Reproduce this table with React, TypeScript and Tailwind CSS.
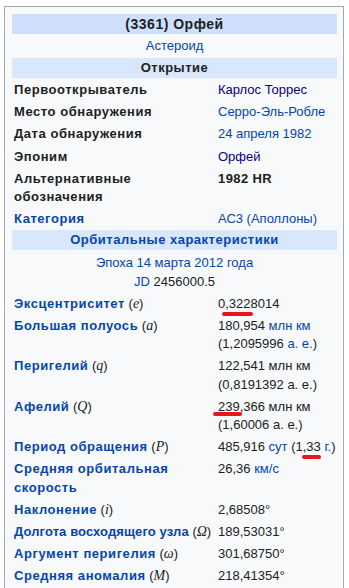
const link = "text-[#0645ad]";
const visited = "text-[#0b0080]";

function Band({ children, tone = "bg-[#d8e7fc]" }: { children: React.ReactNode; tone?: string }) {
  return (
    <div className={`${tone} h-[20px] flex items-center justify-center font-bold tracking-[0.5px]`}>{children}</div>
  );
}

function Row({ label, children, nowrap = false }: { label: React.ReactNode; children: React.ReactNode; nowrap?: boolean }) {
  return (
    <div className="flex py-[2px]">
      <div className={`w-[206px] pl-[2px] pr-[4px] font-bold shrink-0 ${nowrap ? "whitespace-nowrap tracking-[0.1px]" : "tracking-[0.55px]"}`}>{label}</div>
      <div className="flex-1">{children}</div>
    </div>
  );
}

function Sym({ s }: { s: string }) {
  return (
    <span className="font-normal tracking-normal text-[#202122]">
      {" "}(<span className="italic text-[14px]" style={{ fontFamily: '"Liberation Serif", serif' }}>{s}</span>)
    </span>
  );
}

export default function App() {
  return (
    <div className="bg-white min-h-[588px] pt-[6px]" style={{ fontFamily: '"Liberation Sans", Arial, sans-serif' }}>
      <div className="relative ml-[4px] w-[340px] border border-[#a2a9b1] bg-[#f8f9fa] pt-[7px] pl-[7px] pr-[6px] pb-[10px] text-[13px] leading-[18.2px] text-[#202122]">
        <Band tone="bg-[#cee0fd]">
          <span className="text-[14px]">(3361) Орфей</span>
        </Band>
        <div className={`h-[24px] flex items-center justify-center ${link}`}>Астероид</div>
        <Band>Открытие</Band>
        <div className="h-[1px]" />
        <Row label="Первооткрыватель">
          <span className={visited}>Карлос Торрес</span>
        </Row>
        <Row label="Место обнаружения">
          <span className={link}>Серро-Эль-Робле</span>
        </Row>
        <Row label="Дата обнаружения">
          <span className={link}>24 апреля 1982</span>
        </Row>
        <Row label="Эпоним">
          <span className={visited}>Орфей</span>
        </Row>
        <Row label="Альтернативные обозначения">
          <span className="font-bold tracking-[0.4px]">1982 HR</span>
        </Row>
        <Row label={<span className={link}>Категория</span>}>
          <span className={link}>АС3 (Аполлоны)</span>
        </Row>
        <Band>
          <span className={link}>Орбитальные характеристики</span>
        </Band>
        <div className="flex flex-col items-center pt-[4px] pb-[2px]">
          <span className={link}>Эпоха 14 марта 2012 года</span>
          <span>
            <span className={link}>JD</span> 2456000.5
          </span>
        </div>
        <Row label={<><span className={link}>Эксцентриситет</span><Sym s="e" /></>}>
          <span className="relative">
            0,3228014
            <span className="absolute left-[4px] top-[16px] w-[31px] h-[4px] rounded-full bg-[#e8141e]" />
          </span>
        </Row>
        <Row label={<><span className={link}>Большая полуось</span><Sym s="a" /></>}>
          <div>180,954 <span className={link}>млн км</span></div>
          <div>(1,2095996 <span className={link}>а. е.</span>)</div>
        </Row>
        <Row label={<><span className={link}>Перигелий</span><Sym s="q" /></>}>
          <div>122,541 млн км</div>
          <div>(0,8191392 а. е.)</div>
        </Row>
        <Row label={<><span className={link}>Афелий</span><Sym s="Q" /></>}>
          <div className="relative">
            239,366 млн км
            <span className="absolute left-[-5px] top-[14px] w-[29px] h-[4px] rounded-full bg-[#e8141e]" />
          </div>
          <div>(1,60006 а. е.)</div>
        </Row>
        <Row label={<><span className={link}>Период обращения</span><Sym s="P" /></>}>
          <span className="relative">
            485,916 <span className={link}>сут</span> (1,33 <span className={link}>г.</span>)
            <span className="absolute left-[84px] top-[16px] w-[19px] h-[4px] rounded-full bg-[#e8141e]" />
          </span>
        </Row>
        <Row label={<span className={link}>Средняя орбитальная скорость</span>}>
          26,36 <span className={link}>км/с</span>
        </Row>
        <Row label={<><span className={link}>Наклонение</span><Sym s="i" /></>}>2,68508°</Row>
        <Row nowrap label={<><span className={link}>Долгота восходящего узла</span><Sym s="Ω" /></>}>189,53031°</Row>
        <Row label={<><span className={link}>Аргумент перигелия</span><Sym s="ω" /></>}>301,68750°</Row>
        <Row label={<><span className={link}>Средняя аномалия</span><Sym s="M" /></>}>218,41354°</Row>
      </div>
    </div>
  );
}
